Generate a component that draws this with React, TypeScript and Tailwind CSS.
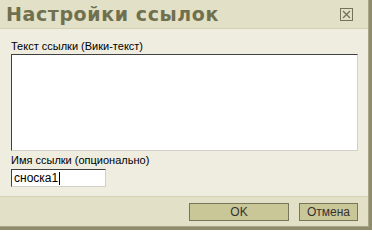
export default function App() {
  return (
    <div
      className="w-[372px] h-[230px] bg-[#8e8c6c] flex text-[#000]"
      style={{ fontFamily: '"Liberation Sans", Arial, sans-serif' }}
    >
      <div className="w-[369px] h-[227px] flex flex-col bg-[#eeede0] border-r border-b border-[#a9a78a]">
        <div className="h-[29px] shrink-0 bg-[#e2e0c6] border-b border-[#d4d2b4] flex items-center justify-between pl-[6px] pr-[15px]">
          <span
            className="text-[19px] font-bold text-[#70704f] tracking-[0.6px] leading-none"
            style={{ fontFamily: '"DejaVu Sans", Verdana, sans-serif' }}
          >
            Настройки ссылок
          </span>
          <span className="w-[13px] h-[13px] border border-[#73735a] flex items-center justify-center">
            <svg width="9" height="9" viewBox="0 0 9 9">
              <path d="M1 1L8 8M8 1L1 8" stroke="#73735a" strokeWidth="1.3" />
            </svg>
          </span>
        </div>
        <div className="flex-1 flex flex-col px-[11px] pt-[11px]">
          <div className="text-[11px] leading-[13px]">Текст ссылки (Вики-текст)</div>
          <div className="mt-[1px] h-[97px] w-[347px] bg-white border border-t-[#404040] border-l-[#404040] border-r-[#d4d0c8] border-b-[#d4d0c8]" />
          <div className="text-[11px] leading-[13px] mt-[3px]">Имя ссылки (опционально)</div>
          <div className="mt-[2px] h-[18px] w-[95px] bg-white border border-t-[#404040] border-l-[#404040] border-r-[#d4d0c8] border-b-[#d4d0c8] flex items-center pl-[2px]">
            <span className="text-[12px] leading-none">сноска1</span>
            <span className="w-[1px] h-[13px] bg-black ml-[1px]" />
          </div>
        </div>
        <div className="h-[30px] shrink-0 bg-[#e2e0c6] border-t border-[#d4d2b4] flex items-center justify-end gap-[10px] pr-[10px]">
          <button className="w-[100px] h-[18px] bg-[#c9c697] border border-[#77755a] text-[12px] leading-none text-[#333]">OK</button>
          <button className="w-[59px] h-[18px] bg-[#c9c697] border border-[#77755a] text-[12px] leading-none text-[#333]">Отмена</button>
        </div>
      </div>
    </div>
  )
}
